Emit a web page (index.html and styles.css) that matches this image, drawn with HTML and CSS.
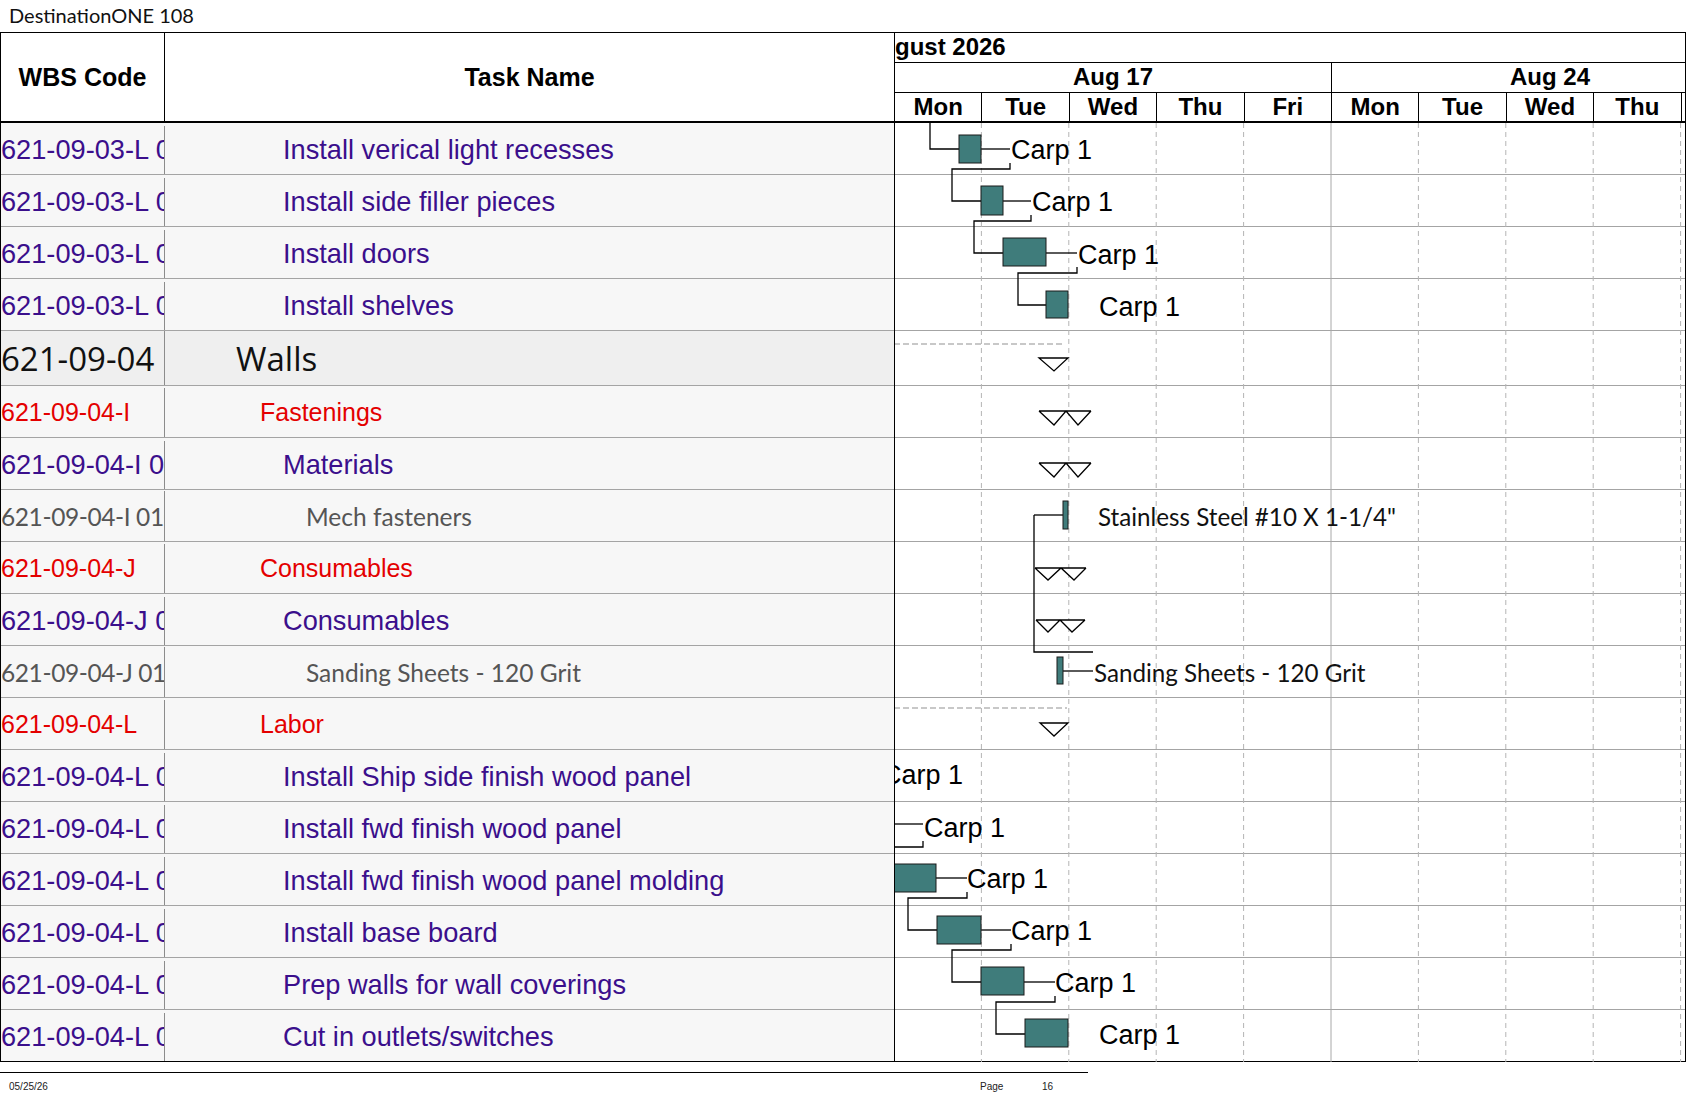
FILE: index.html
```html
<!DOCTYPE html>
<html>
<head>
<meta charset="utf-8">
<title>DestinationONE 108</title>
<link rel="stylesheet" href="styles.css">
</head>
<body>
<div class="title">DestinationONE 108</div>
<div class="sheet">
  <div class="grid">
    <div class="ghead">
      <div class="hwbs">WBS Code</div>
      <div class="htask">Task Name</div>
    </div>
    <div class="gbody">
      <div class="row task"><div class="wbs">621-09-03-L 01</div><div class="name">Install verical light recesses</div></div>
      <div class="row task"><div class="wbs">621-09-03-L 02</div><div class="name">Install side filler pieces</div></div>
      <div class="row task"><div class="wbs">621-09-03-L 03</div><div class="name">Install doors</div></div>
      <div class="row task"><div class="wbs">621-09-03-L 04</div><div class="name">Install shelves</div></div>
      <div class="row walls"><div class="wbs">621-09-04</div><div class="name">Walls</div></div>
      <div class="row group"><div class="wbs">621-09-04-I</div><div class="name">Fastenings</div></div>
      <div class="row task"><div class="wbs">621-09-04-I 01</div><div class="name">Materials</div></div>
      <div class="row item"><div class="wbs">621-09-04-I 0101</div><div class="name">Mech fasteners</div></div>
      <div class="row group"><div class="wbs">621-09-04-J</div><div class="name">Consumables</div></div>
      <div class="row task"><div class="wbs">621-09-04-J 01</div><div class="name">Consumables</div></div>
      <div class="row item"><div class="wbs">621-09-04-J 0101</div><div class="name">Sanding Sheets - 120 Grit</div></div>
      <div class="row group"><div class="wbs">621-09-04-L</div><div class="name">Labor</div></div>
      <div class="row task"><div class="wbs">621-09-04-L 01</div><div class="name">Install Ship side finish wood panel</div></div>
      <div class="row task"><div class="wbs">621-09-04-L 02</div><div class="name">Install fwd finish wood panel</div></div>
      <div class="row task"><div class="wbs">621-09-04-L 03</div><div class="name">Install fwd finish wood panel molding</div></div>
      <div class="row task"><div class="wbs">621-09-04-L 04</div><div class="name">Install base board</div></div>
      <div class="row task"><div class="wbs">621-09-04-L 05</div><div class="name">Prep walls for wall coverings</div></div>
      <div class="row task"><div class="wbs">621-09-04-L 06</div><div class="name">Cut in outlets/switches</div></div>
    </div>
  </div>
  <div class="gantt">
    <div class="thead">
      <div class="month"><span class="month-label">August 2026</span></div>
      <div class="weeks"><div class="week">Aug 17</div><div class="week">Aug 24</div></div>
      <div class="days">
        <div class="day">Mon</div><div class="day">Tue</div><div class="day">Wed</div><div class="day">Thu</div><div class="day">Fri</div>
        <div class="day">Mon</div><div class="day">Tue</div><div class="day">Wed</div><div class="day">Thu</div><div class="day">Fri</div>
      </div>
    </div>
    <div class="tbody">
      <div class="trow"></div><div class="trow"></div><div class="trow"></div><div class="trow"></div>
      <div class="trow walls"></div>
      <div class="trow"></div><div class="trow"></div><div class="trow"></div><div class="trow"></div>
      <div class="trow"></div><div class="trow"></div><div class="trow"></div><div class="trow"></div>
      <div class="trow"></div><div class="trow"></div><div class="trow"></div><div class="trow"></div>
      <div class="trow"></div>
      <svg class="chart" width="790" height="939" viewBox="0 0 790 939">
        <g transform="translate(-1 0)">
          <g class="grid-d">
            <line x1="87.4" y1="0" x2="87.4" y2="939"/>
            <line x1="174.8" y1="0" x2="174.8" y2="939"/>
            <line x1="262.2" y1="0" x2="262.2" y2="939"/>
            <line x1="349.6" y1="0" x2="349.6" y2="939"/>
            <line x1="524.4" y1="0" x2="524.4" y2="939"/>
            <line x1="611.8" y1="0" x2="611.8" y2="939"/>
            <line x1="699.2" y1="0" x2="699.2" y2="939"/>
            <line x1="786.6" y1="0" x2="786.6" y2="939"/>
          </g>
          <line class="grid-w" x1="437" y1="0" x2="437" y2="939"/>
          <g class="sumline">
            <line x1="0" y1="221" x2="170" y2="221"/>
            <line x1="0" y1="585" x2="173" y2="585"/>
          </g>
          <g class="conn">
            <path d="M36 0 V26 H65"/>
            <path d="M87 26 H116"/>
            <path d="M116 40 V46 H58 V78 H87"/>
            <path d="M109 78 H137"/>
            <path d="M137 92 V98 H80 V130 H109"/>
            <path d="M152 130 H183"/>
            <path d="M183 144 V150 H124 V182 H152"/>
            <path d="M140 392 H169"/>
            <path d="M140 392 V529 H199"/>
            <path d="M169 548 H199"/>
            <path d="M0 701 H29"/>
            <path d="M29 718 V724 H0"/>
            <path d="M42 755 H73"/>
            <path d="M73 769 V775 H14 V807 H43"/>
            <path d="M87 807 H117"/>
            <path d="M117 821 V827 H58 V859 H87"/>
            <path d="M130 859 H161"/>
            <path d="M161 873 V879 H102 V911 H131"/>
          </g>
          <g class="tri">
            <path d="M145 235 H174 L160 248 Z"/>
            <path d="M145 288 H197 M145 288 L160 302 L172 288 L184 302 L197 288"/>
            <path d="M145 340 H197 M145 340 L160 354 L172 340 L184 354 L197 340"/>
            <path d="M141 445 H192 M141 445 L154 457 L167 445 L180 457 L192 445"/>
            <path d="M142 497 H191 M142 497 L154 509 L166 497 L178 509 L191 497"/>
            <path d="M146 600 H174 L160 613 Z"/>
          </g>
          <g class="bar">
            <rect x="65" y="12" width="22" height="28"/>
            <rect x="87" y="63" width="22" height="29"/>
            <rect x="109" y="115" width="43" height="28"/>
            <rect x="152" y="168" width="22" height="27"/>
            <rect x="169" y="378" width="5" height="28"/>
            <rect x="163" y="534" width="6" height="27"/>
            <rect x="-5" y="741" width="47" height="28"/>
            <rect x="43" y="793" width="44" height="28"/>
            <rect x="87" y="844" width="43" height="28"/>
            <rect x="131" y="896" width="43" height="28"/>
          </g>
          <g class="lbl">
            <text x="117" y="36">Carp 1</text>
            <text x="138" y="88">Carp 1</text>
            <text x="184" y="141">Carp 1</text>
            <text x="205" y="193">Carp 1</text>
            <text x="-12" y="661">Carp 1</text>
            <text x="30" y="714">Carp 1</text>
            <text x="73" y="765">Carp 1</text>
            <text x="117" y="817">Carp 1</text>
            <text x="161" y="869">Carp 1</text>
            <text x="205" y="921">Carp 1</text>
          </g>
          <g class="lbl2">
            <text x="204" y="403">Stainless Steel #10 X 1-1/4"</text>
            <text x="200" y="559">Sanding Sheets - 120 Grit</text>
          </g>
        </g>
      </svg>
    </div>
  </div>
</div>
<div class="footer">
  <div class="f-date">05/25/26</div>
  <div class="f-page">Page</div>
  <div class="f-num">16</div>
</div>
</body>
</html>
```

FILE: styles.css
```css
* { box-sizing: border-box; }

body {
  margin: 0;
  background: #fff;
  width: 1687px;
  overflow: hidden;
  font-family: "Liberation Sans", Arial, sans-serif;
  color: #000;
}

.title {
  height: 32px;
  padding-left: 9px;
  font-family: Lato, "Liberation Sans", sans-serif;
  font-weight: 400;
  font-size: 20px;
  line-height: 31px;
  color: #111;
}

.sheet {
  display: flex;
  width: 1686px;
  border-top: 1px solid #000;
  border-left: 1px solid #000;
}

/* ---------- left table ---------- */
.grid {
  flex: 0 0 894px;
  border-right: 1px solid #000;
}

.ghead {
  display: flex;
  height: 90px;
  border-bottom: 2px solid #000;
  font-weight: bold;
  font-size: 25px;
}

.hwbs {
  flex: 0 0 164px;
  border-right: 1px solid #000;
  display: flex;
  align-items: center;
  justify-content: center;
}

.htask {
  flex: 1;
  display: flex;
  align-items: center;
  justify-content: center;
}

.row {
  display: flex;
  height: 52px;
  background: #f7f7f7;
  border-bottom: 1px solid #a4a4a4;
}

.row:last-child { border-bottom-color: #000; }

.wbs {
  flex: 0 0 164px;
  border-right: 1px solid #8c8c8c;
  display: flex;
  align-items: center;
  white-space: nowrap;
  overflow: hidden;
}

.name {
  flex: 1;
  display: flex;
  align-items: center;
  white-space: nowrap;
  overflow: hidden;
}

.row.task { color: #3b0f8c; font-size: 27.2px; padding-top: 3px; }
.row.task .name { padding-left: 118px; }

.row.group { color: #e40000; font-size: 25px; padding-top: 2px; }
.row.group .name { padding-left: 95px; }

.row.item {
  color: #555;
  font-family: Lato, "Liberation Sans", sans-serif;
  font-size: 24.5px;
  padding-top: 1px;
}
.row.item .wbs { letter-spacing: -0.4px; }
.row.item .name { padding-left: 141px; }

.row.walls {
  height: 55px;
  background: #efefef;
  color: #111;
  font-family: "Open Sans", "Liberation Sans", sans-serif;
  font-size: 33px;
}
.row.walls .name { padding-left: 71px; }

/* ---------- gantt ---------- */
.gantt {
  flex: 0 0 791px;
  border-right: 1px solid #000;
  overflow: hidden;
}

.thead {
  height: 90px;
  border-bottom: 2px solid #000;
  font-weight: bold;
  font-size: 24px;
}

.month {
  height: 30px;
  border-bottom: 1px solid #000;
  overflow: hidden;
  white-space: nowrap;
  line-height: 28px;
}

.month-label {
  display: inline-block;
  margin-left: -32px;
}

.weeks {
  display: flex;
  height: 30px;
  border-bottom: 1px solid #000;
  overflow: hidden;
}

.week {
  flex: 0 0 437px;
  border-right: 1px solid #000;
  text-align: center;
  line-height: 28px;
}

.days {
  display: flex;
  height: 28px;
  overflow: hidden;
}

.day {
  flex: 0 0 87.4px;
  border-right: 1px solid #000;
  text-align: center;
  line-height: 28px;
}

.tbody {
  position: relative;
}

.trow {
  height: 52px;
  border-bottom: 1px solid #a4a4a4;
}

.trow.walls { height: 55px; }
.trow:nth-last-child(2) { border-bottom-color: #000; }

.chart {
  position: absolute;
  top: 0;
  left: 0;
  overflow: hidden;
}

.grid-d line {
  stroke: #b4b4b4;
  stroke-width: 1;
  stroke-dasharray: 5 4;
}

.grid-w {
  stroke: #a8a8a8;
  stroke-width: 1;
}

.sumline line {
  stroke: #c8c8c8;
  stroke-width: 2;
  stroke-dasharray: 6 3;
}

.conn path {
  fill: none;
  stroke: #000;
  stroke-width: 1.3;
}

.tri path {
  fill: #fff;
  stroke: #000;
  stroke-width: 1.3;
  stroke-linejoin: miter;
}

.bar rect {
  fill: #3f7c7b;
  stroke: #1a1a1a;
  stroke-width: 1;
}

.lbl text {
  font-family: "Liberation Sans", Arial, sans-serif;
  font-size: 27px;
  fill: #000;
}

.lbl2 text {
  font-family: Lato, "Liberation Sans", sans-serif;
  font-size: 24.2px;
  fill: #111;
}

/* ---------- footer ---------- */
.footer {
  display: flex;
  width: 1088px;
  margin-top: 10px;
  border-top: 1px solid #000;
  padding-top: 8px;
  font-size: 10px;
  line-height: 11px;
  color: #222;
}

.f-date {
  flex: 0 0 980px;
  padding-left: 9px;
}

.f-page {
  flex: 0 0 62px;
}
```
